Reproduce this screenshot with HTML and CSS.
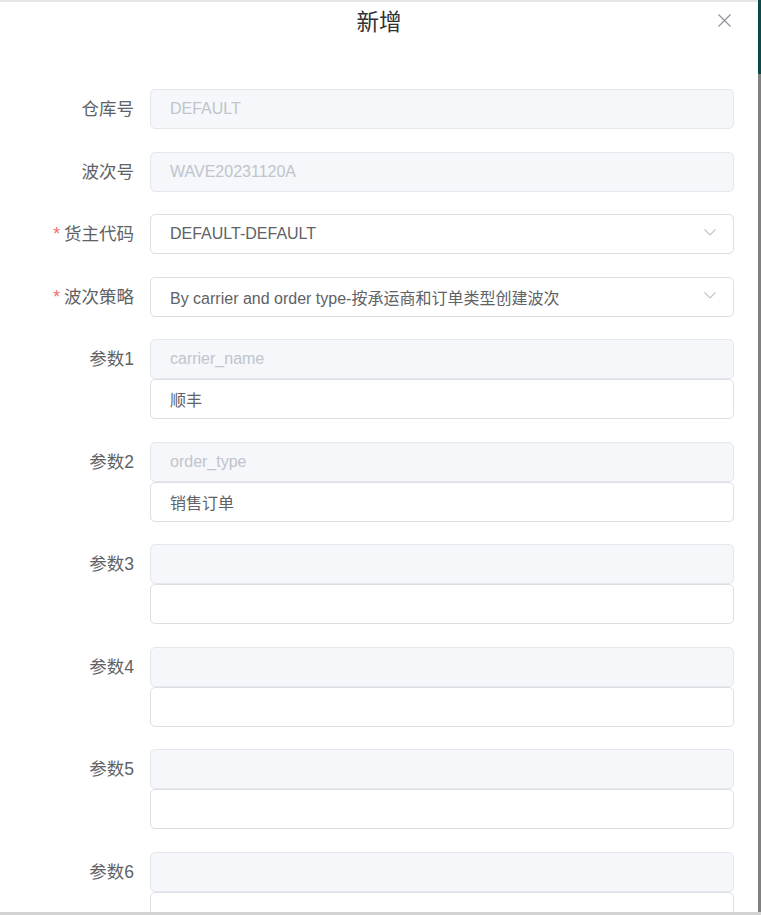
FILE: index.html
```html
<!DOCTYPE html>
<html lang="zh-CN">
<head>
  <meta charset="UTF-8">
  <meta name="viewport" content="width=device-width, initial-scale=1.0">
  <title>新增波次</title>
  <link rel="stylesheet" href="styles.css">
</head>
<body>
  <div class="frame">
    <div class="dialog">
      <div class="dialog-header">
        <span class="dialog-title">新增</span>
        <button class="dialog-close" aria-label="关闭">
          <svg width="13" height="13" viewBox="0 0 13 13">
            <path d="M0.5 0.5L12.5 12.5M12.5 0.5L0.5 12.5" stroke="#909399" stroke-width="1.2" fill="none"/>
          </svg>
        </button>
      </div>

      <div class="form">
        <div class="form-item">
          <label class="form-label">仓库号</label>
          <div class="form-content">
            <div class="input disabled"><span class="placeholder">DEFAULT</span></div>
          </div>
        </div>

        <div class="form-item">
          <label class="form-label">波次号</label>
          <div class="form-content">
            <div class="input disabled"><span class="placeholder">WAVE20231120A</span></div>
          </div>
        </div>

        <div class="form-item">
          <label class="form-label"><span class="required">*</span>货主代码</label>
          <div class="form-content">
            <div class="input select">
              <span>DEFAULT-DEFAULT</span>
              <svg class="arrow" width="12" height="7" viewBox="0 0 12 7"><path d="M0.5 0.5L6 6L11.5 0.5" stroke="#c0c4cc" stroke-width="1.1" fill="none"/></svg>
            </div>
          </div>
        </div>

        <div class="form-item">
          <label class="form-label"><span class="required">*</span>波次策略</label>
          <div class="form-content">
            <div class="input select">
              <span>By carrier and order type-按承运商和订单类型创建波次</span>
              <svg class="arrow" width="12" height="7" viewBox="0 0 12 7"><path d="M0.5 0.5L6 6L11.5 0.5" stroke="#c0c4cc" stroke-width="1.1" fill="none"/></svg>
            </div>
          </div>
        </div>

        <div class="form-item">
          <label class="form-label">参数1</label>
          <div class="form-content">
            <div class="input disabled"><span class="placeholder">carrier_name</span></div>
            <div class="input"><span>顺丰</span></div>
          </div>
        </div>

        <div class="form-item">
          <label class="form-label">参数2</label>
          <div class="form-content">
            <div class="input disabled"><span class="placeholder">order_type</span></div>
            <div class="input"><span>销售订单</span></div>
          </div>
        </div>

        <div class="form-item">
          <label class="form-label">参数3</label>
          <div class="form-content">
            <div class="input disabled"></div>
            <div class="input"></div>
          </div>
        </div>

        <div class="form-item">
          <label class="form-label">参数4</label>
          <div class="form-content">
            <div class="input disabled"></div>
            <div class="input"></div>
          </div>
        </div>

        <div class="form-item">
          <label class="form-label">参数5</label>
          <div class="form-content">
            <div class="input disabled"></div>
            <div class="input"></div>
          </div>
        </div>

        <div class="form-item">
          <label class="form-label">参数6</label>
          <div class="form-content">
            <div class="input disabled"></div>
            <div class="input"></div>
          </div>
        </div>
      </div>
    </div>

    <div class="scrollbar">
      <div class="scrollbar-thumb"></div>
    </div>
  </div>
  <div class="bottom-strip"></div>
</body>
</html>
```

FILE: styles.css
```css
html, body {
  margin: 0;
  height: 915px;
  overflow: hidden;
}

body {
  font-family: 'Liberation Sans', 'Noto Sans CJK SC', sans-serif;
  background-color: #fff;
  color: #606266;
  display: flex;
  flex-direction: column;
}

.frame {
  flex: 1;
  display: flex;
  overflow: hidden;
}

.dialog {
  flex: 1;
  position: relative;
  border-top: 2px solid #e6e6e6;
  padding-right: 24px;
  overflow: hidden;
}

.dialog-header {
  height: 42px;
  line-height: 42px;
  text-align: center;
  margin-left: 24px;
}

.dialog-title {
  font-size: 22.5px;
  color: #303133;
}

.dialog-close {
  position: absolute;
  top: 12px;
  right: 27px;
  width: 13px;
  height: 13px;
  padding: 0;
  border: none;
  background: none;
  cursor: pointer;
  display: flex;
}

.form {
  margin-top: 45px;
}

.form-item {
  display: grid;
  grid-template-columns: 150px 1fr;
  margin-bottom: 22.5px;
}

.form-label {
  text-align: right;
  padding-right: 16px;
  line-height: 40px;
  font-size: 17.5px;
  color: #606266;
}

.required {
  color: #f56c6c;
  margin-right: 4px;
}

.input {
  box-sizing: border-box;
  height: 40px;
  border: 1px solid #dcdfe6;
  border-radius: 5px;
  padding: 0 17px 0 19px;
  display: flex;
  align-items: center;
  font-size: 16px;
  color: #606266;
  background-color: #fff;
}

.input.disabled {
  background-color: #f5f7fa;
  border-color: #e4e7ed;
}

.placeholder {
  color: #c0c4cc;
}

.select {
  justify-content: space-between;
}

.arrow {
  flex-shrink: 0;
  margin-top: -3px;
}

.scrollbar {
  width: 3px;
  background-color: #808080;
}

.scrollbar-thumb {
  height: 74px;
  background-color: #0c4848;
}

.bottom-strip {
  height: 3px;
  background-color: #d2d2d2;
}
```
